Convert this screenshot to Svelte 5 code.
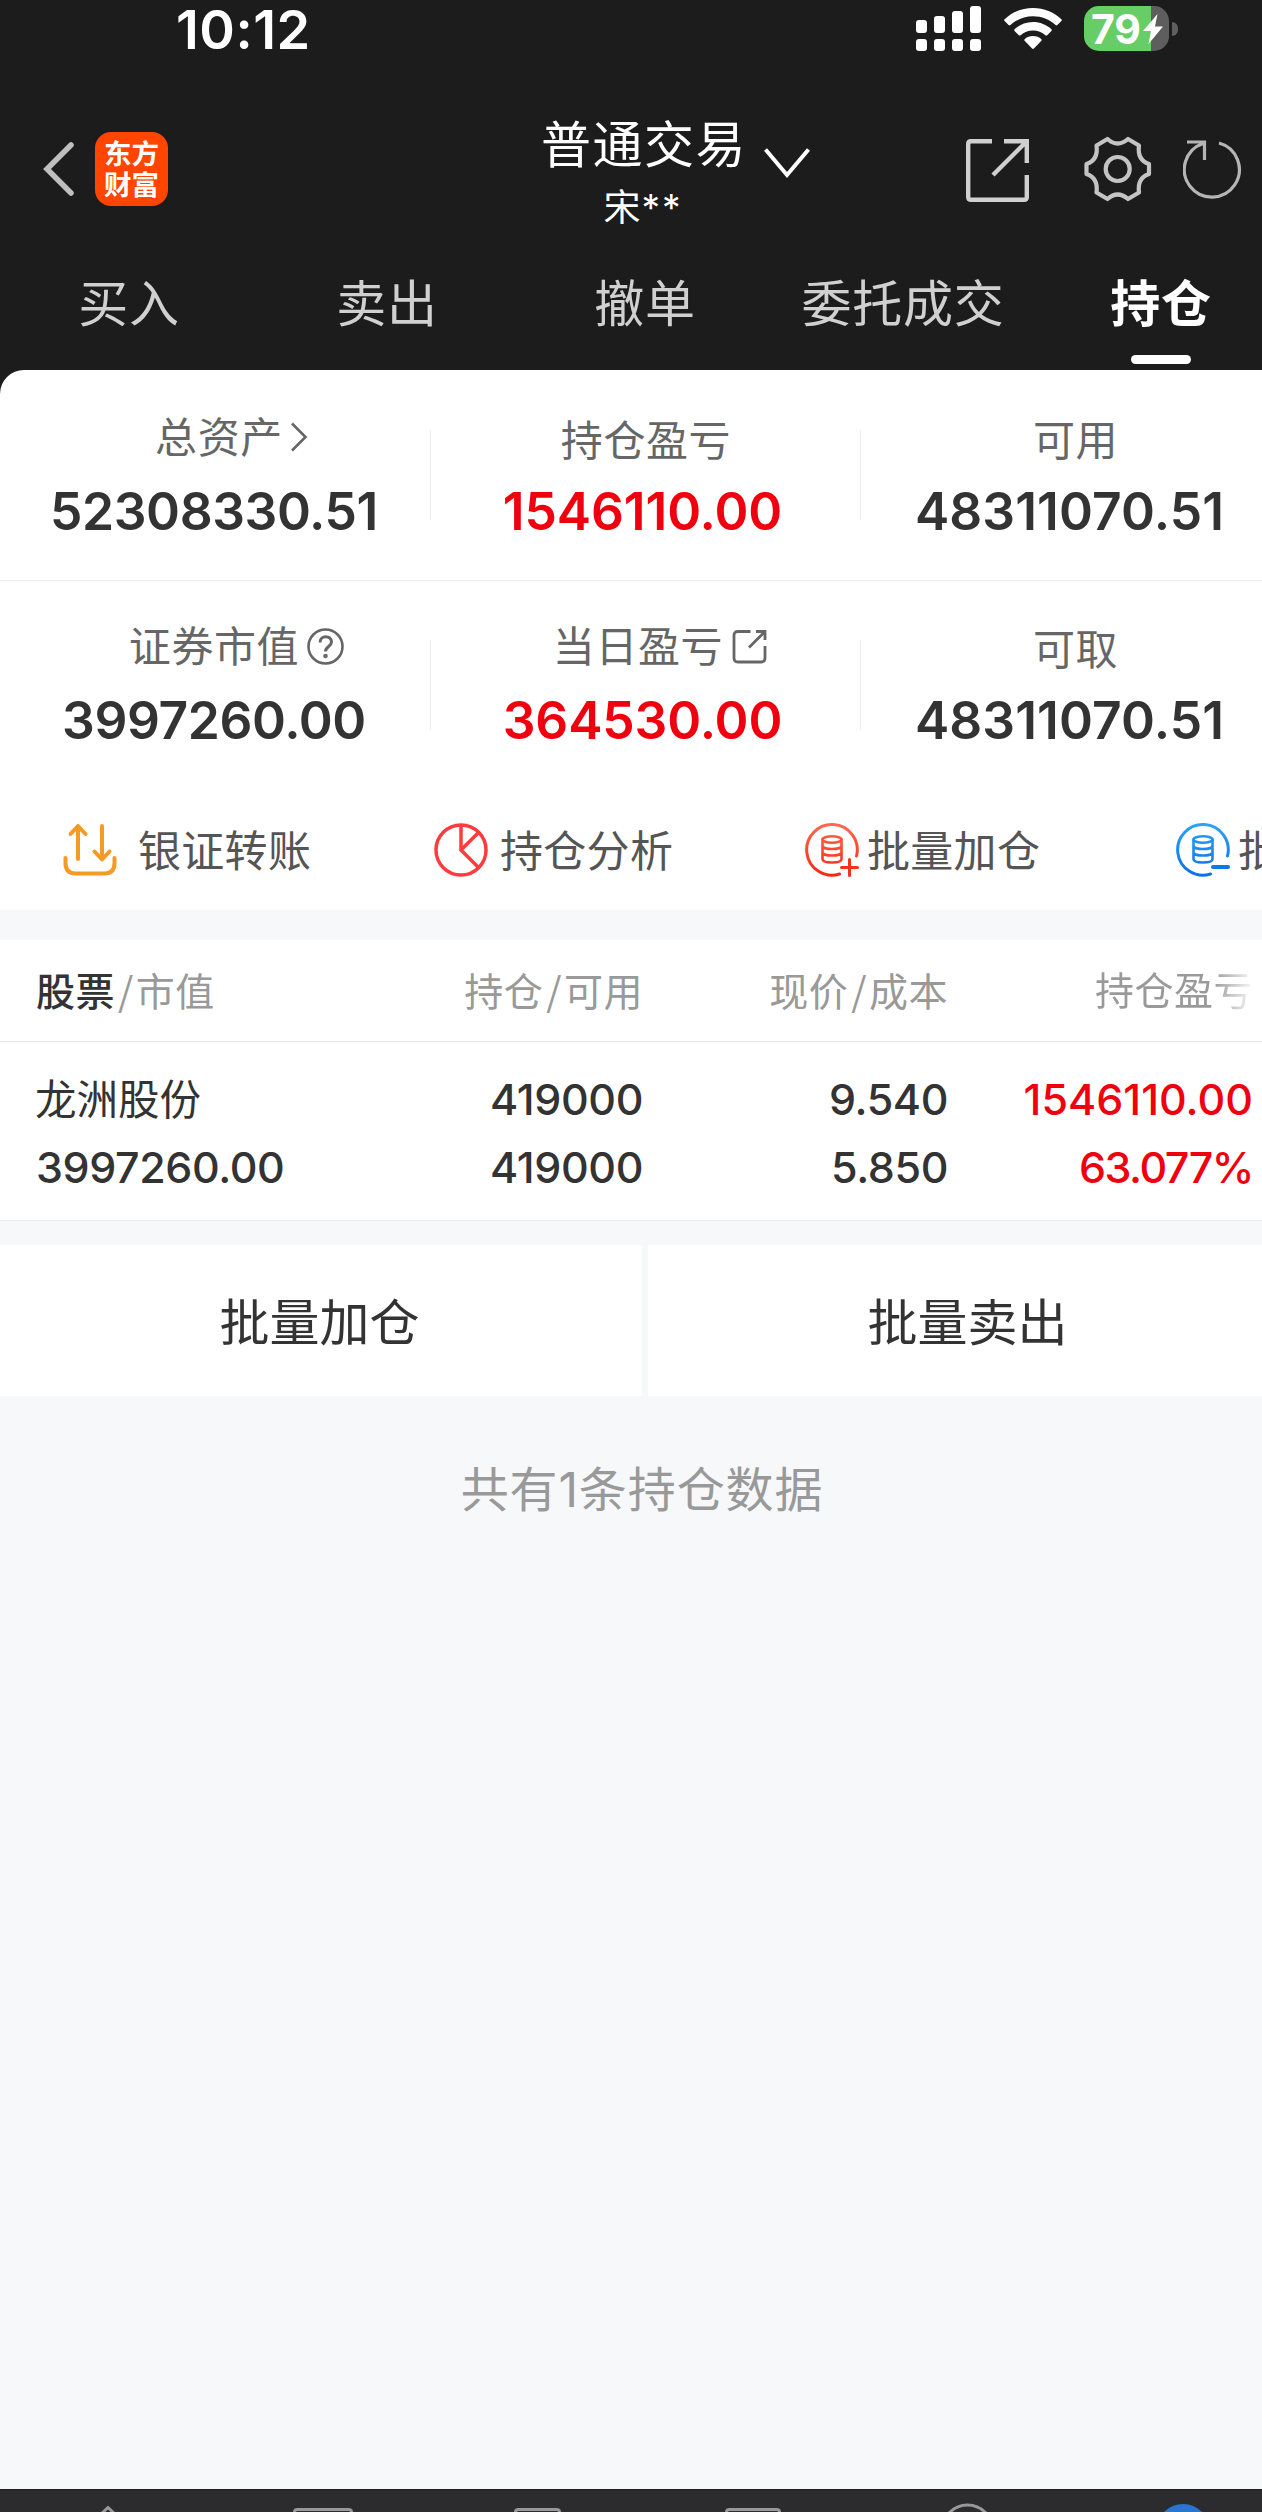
<script>
  const tabs = ['买入', '卖出', '撤单', '委托成交', '持仓'];
  const activeTab = '持仓';

  const summary = [
    [
      { label: '总资产', value: '52308330.51', icon: 'arrow' },
      { label: '持仓盈亏', value: '1546110.00', red: true },
      { label: '可用', value: '48311070.51' }
    ],
    [
      { label: '证券市值', value: '3997260.00', icon: 'help' },
      { label: '当日盈亏', value: '364530.00', icon: 'share', red: true },
      { label: '可取', value: '48311070.51' }
    ]
  ];

  const actions = [
    { label: '银证转账', icon: 'transfer' },
    { label: '持仓分析', icon: 'pie' },
    { label: '批量加仓', icon: 'add' },
    { label: '批量卖出', icon: 'minus' }
  ];

  const holdings = [
    {
      name: '龙洲股份',
      market: '3997260.00',
      total: '419000',
      available: '419000',
      price: '9.540',
      cost: '5.850',
      profit: '1546110.00',
      rate: '63.077%'
    }
  ];
</script>

<div class="viewport">
  <div class="screen">
    <header>
      <div class="status">
        <span class="time">10:12</span>
        <svg class="signal" width="66" height="46" viewBox="0 0 66 46" fill="#fff">
          <rect x="0" y="14" width="11" height="13" rx="3" />
          <rect x="18" y="10" width="11" height="17" rx="3" />
          <rect x="36" y="5" width="11" height="22" rx="3" />
          <rect x="54" y="0" width="11" height="27" rx="3" />
          <rect x="0" y="33" width="11" height="12" rx="3" />
          <rect x="18" y="33" width="11" height="12" rx="3" />
          <rect x="36" y="33" width="11" height="12" rx="3" />
          <rect x="54" y="33" width="11" height="12" rx="3" />
        </svg>
        <svg class="wifi" width="58" height="42" viewBox="0 0 58 42" fill="#fff">
          <path d="M29 0C18 0 8 4 .6 11.200q-.9.9 0 1.800l4 4q.9.800 1.800 0C12.500 11.500 20.300 8.300 29 8.300s16.500 3.200 22.600 8.700q.9.800 1.800 0l4-4q.9-.9 0-1.800C50 4 40 0 29 0z" />
          <path d="M29 14c-7 0-13.500 2.700-18.400 7.200q-.9.900 0 1.800l4.200 4.200q.9.800 1.800 0c3.300-3 7.600-4.800 12.400-4.800s9.100 1.800 12.400 4.800q.9.800 1.800 0l4.200-4.200q.9-.9 0-1.800C42.500 16.700 36 14 29 14z" />
          <path d="M29 28c-3.300 0-6.200 1.200-8.400 3.200q-.7.800 0 1.600l7.500 7.700q.9.900 1.800 0l7.500-7.700q.7-.8 0-1.600C35.200 29.200 32.300 28 29 28z" />
        </svg>
        <div class="battery">
          <span>79</span>
          <svg width="20" height="30" viewBox="0 0 20 30" fill="#fff">
            <path d="M14.500 0L0 17h8L5.500 30 20 12.500h-8z" />
          </svg>
        </div>
        <i class="nub"></i>
      </div>

      <div class="nav">
        <svg class="back" width="32" height="56" viewBox="0 0 32 56" fill="none" stroke="#bfbfbf" stroke-width="5.500" stroke-linecap="round">
          <path d="M28 4L4 28l24 24" stroke-linejoin="miter" />
        </svg>
        <div class="logo"><span>东方</span><span>财富</span></div>
        <div class="title">
          <strong>普通交易</strong>
          <small>宋<i>**</i></small>
        </div>
        <svg class="down" width="46" height="31" viewBox="0 0 46 31" fill="none" stroke="#fff" stroke-width="4">
          <path d="M1.500 1.500L23 27l21.500-25.500" />
        </svg>
        <svg class="nav-share" width="64" height="64" viewBox="0 0 64 64" fill="none" stroke="#d0d0d0" stroke-width="4.400">
          <path d="M26 2.200H5q-2.800 0-2.800 2.800V58q0 2.800 2.800 2.800h53q2.800 0 2.800-2.800V36" />
          <path d="M38 2.200h22.800V24M60 3L27 36" />
        </svg>
        <svg class="gear" width="68" height="66" viewBox="0 0 68 66" fill="none" stroke="#c4c4c4" stroke-width="4.200" stroke-linejoin="round">
          <path d="M23.500 3q10 9 20.500 0L55 9.500q-2 14.500 10 18.500v10q-12 4-10 18.500L44 63q-10.500-9-20.500 0l-11-6.500q2-14.500-10-18.500V28q12-4 10-18.500z" />
          <circle cx="33.700" cy="33" r="12" />
        </svg>
        <svg class="refresh" width="60" height="60" viewBox="0 0 60 60" fill="none" stroke="#b5b5b5" stroke-width="3.200">
          <path d="M36 4A27.500 27.500 0 1 1 20 4.500M4 3h17.500v18" />
        </svg>
      </div>

      <nav class="tabs">
        {#each tabs as tab}
          <div class="tab" class:active={tab === activeTab}>{tab}</div>
        {/each}
      </nav>
    </header>

    <section class="summary">
      {#each summary as row}
        <div class="summary-row">
          {#each row as cell}
            <div class="cell" class:with-icon={cell.icon}>
              <div class="label {cell.icon ?? ''}">
                <span>{cell.label}</span>
                {#if cell.icon === 'arrow'}
                  <svg width="18" height="30" viewBox="0 0 18 30" fill="none" stroke="#666" stroke-width="2.600">
                    <path d="M2 1.500L15.500 15 2 28.500" />
                  </svg>
                {:else if cell.icon === 'help'}
                  <svg width="37" height="37" viewBox="0 0 37 37" fill="none" stroke="#666" stroke-width="2.600">
                    <circle cx="18.500" cy="18.500" r="17" />
                    <path d="M13 14.500c0-8 11.500-7.500 11.500-.5 0 4.500-6 4.500-6 9.500" stroke-width="3" />
                    <circle cx="18.500" cy="28" r="1" />
                  </svg>
                {:else if cell.icon === 'share'}
                  <svg width="35" height="35" viewBox="0 0 35 35" fill="none" stroke="#666" stroke-width="2.800">
                    <path d="M18.500 2.500H6q-4 0-4 4V29q0 4 4 4h23q4 0 4-4V17" />
                    <path d="M24 2.500h9V11M32.500 3L17 18.500" />
                  </svg>
                {/if}
              </div>
              <div class="value" class:red={cell.red}>{cell.value}</div>
            </div>
          {/each}
        </div>
      {/each}

      <div class="actions">
        {#each actions as action}
          <div class="action {action.icon}">
            {#if action.icon === 'transfer'}
              <svg width="54" height="54" viewBox="0 0 54 54" fill="none" stroke="#f39a27" stroke-width="4" stroke-linecap="round" stroke-linejoin="round">
                <path d="M2.500 35v5q0 10.500 10 10.500h29q10 0 10-10.500v-5" />
                <path d="M15 36V3M7.500 11L15 3l7.500 8M39 3v33M31.500 28.500l7.500 8 7.500-8" />
              </svg>
            {:else if action.icon === 'pie'}
              <svg width="54" height="54" viewBox="0 0 54 54" fill="none" stroke="#ff3b3e" stroke-width="3.500">
                <circle cx="27" cy="27" r="25" />
                <path d="M27 2v25l17.500 17.500M27 27L44.500 9.500" />
              </svg>
            {:else}
              <svg width="54" height="54" viewBox="0 0 54 54" fill="none" stroke="url(#grad-{action.icon})" stroke-width="3" stroke-linecap="round">
                <defs>
                  <linearGradient id="grad-{action.icon}" gradientUnits="userSpaceOnUse" x1="0" y1="0" x2="0" y2="54">
                    <stop offset="0" stop-color={action.icon === 'add' ? '#ff6a50' : '#2ba5f5'} />
                    <stop offset="1" stop-color={action.icon === 'add' ? '#fb2512' : '#0b70ea'} />
                  </linearGradient>
                </defs>
                <path d="M51.500 33A25.300 25.300 0 1 0 34.500 51" />
                <ellipse cx="27" cy="16.500" rx="9.500" ry="3.200" stroke-width="2.600" />
                <path d="M17.500 16.500V36q0 3.500 9.500 3.500t9.500-3.500V16.500M17.500 23q1 3 9.500 3t9.500-3M17.500 29.500q1 3 9.500 3t9.500-3" stroke-width="2.600" />
                {#if action.icon === 'add'}
                  <path d="M36.500 44.500h16M44.500 36.500v16" stroke="#fb3018" />
                {:else}
                  <path d="M37 44h15" stroke="#0b78ec" stroke-width="4" />
                {/if}
              </svg>
            {/if}
            <span>{action.label}</span>
          </div>
        {/each}
      </div>
    </section>

    <section class="holdings">
      <div class="row head">
        <div><b>股票</b><i>/</i>市值</div>
        <div>持仓<i>/</i>可用</div>
        <div>现价<i>/</i>成本</div>
        <div class="fade">持仓盈亏</div>
      </div>
      {#each holdings as item}
        <div class="row item">
          <div><span class="name">{item.name}</span><span>{item.market}</span></div>
          <div><span>{item.total}</span><span>{item.available}</span></div>
          <div><span>{item.price}</span><span>{item.cost}</span></div>
          <div class="red"><span>{item.profit}</span><span class="rate">{item.rate}</span></div>
        </div>
      {/each}
    </section>

    <div class="buttons">
      <button>批量加仓</button>
      <button>批量卖出</button>
    </div>

    <p class="count">共有1条持仓数据</p>

    <footer>
      <svg width="1290" height="22" viewBox="0 1 1290 22" fill="none" stroke="#98989c" stroke-width="3">
        <path d="M99 27l9-8.500 9 8.500" />
        <path d="M294.500 24v-1q0-2.500 3-2.500h51q3 0 3 2.500v1" />
        <path d="M515.500 24v-1q0-2.500 3-2.500h38q3 0 3 2.500v1" />
        <path d="M726.500 24v-1q0-2.500 3-2.500h47q3 0 3 2.500v1" />
        <circle cx="967.500" cy="41" r="25" />
        <circle cx="1183" cy="42" r="27" fill="#2a75d0" stroke="none" />
      </svg>
    </footer>
  </div>
</div>

<style>
  .viewport {
    width: 100%;
    height: 2512px;
    overflow: hidden;
  }

  .screen {
    display: flex;
    flex-direction: column;
    width: 1290px;
    height: 2512px;
    background: #f7f8fa;
    color: #333;
    font-family: Inter, "Noto Sans CJK SC", sans-serif;
  }

  svg {
    display: block;
    flex: none;
  }

  header {
    position: relative;
    z-index: 1;
    height: 370px;
    flex: none;
    color: #fff;
  }

  .status {
    display: flex;
    height: 64px;
    padding-left: 176px;
    box-sizing: border-box;
    background: #1c1c1c;
  }

  .time {
    width: 740px;
    font-size: 54px;
    font-weight: 600;
    line-height: 60px;
    letter-spacing: 0.500px;
  }

  .signal {
    margin-top: 6px;
  }

  .wifi {
    margin: 8px 0 0 22px;
  }

  .battery {
    display: flex;
    align-items: center;
    gap: 2px;
    width: 85px;
    height: 45px;
    margin: 6px 0 0 22px;
    padding-left: 7px;
    box-sizing: border-box;
    border-radius: 15px;
    background: linear-gradient(90deg, #67ce67 67px, #5e5e5e 67px);
    font-size: 41px;
    font-weight: 700;
    letter-spacing: -0.200px;
  }

  .nub {
    width: 6px;
    height: 14px;
    margin: 22px 0 0 3px;
    border-radius: 0 6px 6px 0;
    background: #5e5e5e;
  }

  .nav {
    display: flex;
    height: 186px;
    padding-left: 43px;
    box-sizing: border-box;
    background: #1c1c1c;
  }

  .back {
    margin-top: 77px;
  }

  .logo {
    display: flex;
    flex-direction: column;
    justify-content: center;
    width: 73px;
    height: 74px;
    margin: 68px 0 0 20px;
    padding-top: 2px;
    box-sizing: border-box;
    border-radius: 16px;
    background: #ff4500;
    font-size: 27.500px;
    font-weight: 700;
    line-height: 31px;
    text-align: center;
  }

  .title {
    display: flex;
    flex-direction: column;
    align-items: center;
    width: 202px;
    margin: 48px 0 0 375px;
  }

  .title strong {
    font-size: 50px;
    font-weight: 400;
    line-height: 66px;
    letter-spacing: 1.500px;
    white-space: nowrap;
  }

  .title small {
    margin-left: -2px;
    font-size: 37px;
    line-height: 59px;
  }

  .title i {
    margin-left: 1px;
    font-style: normal;
    letter-spacing: 2px;
  }

  .down {
    margin: 84px 0 0 19px;
  }

  .nav-share {
    margin: 75px 0 0 156px;
  }

  .gear {
    margin: 72px 0 0 54px;
  }

  .refresh {
    margin: 75px 0 0 31px;
  }

  .tabs {
    display: grid;
    grid-template-columns: repeat(5, 1fr);
    height: 120px;
    background: #1c1c1c;
  }

  .tab {
    display: flex;
    flex-direction: column;
    align-items: center;
    color: #d0d0d0;
    font-size: 50px;
    line-height: 108px;
    letter-spacing: 0.800px;
  }

  .tab.active {
    color: #fff;
    font-weight: 700;
  }

  .tab.active::after {
    content: '';
    width: 60px;
    height: 9px;
    margin-top: -3px;
    border-radius: 5px;
    background: #fff;
  }

  .summary {
    height: 540px;
    flex: none;
    border-radius: 24px 24px 0 0;
    background: #fff;
    box-shadow: 0 -24px 0 0 #1c1c1c;
  }

  .summary-row {
    display: grid;
    grid-template-columns: 431px 430px 429px;
    height: 210px;
  }

  .summary-row:first-child {
    box-shadow: 0 1px 0 #ececec;
  }

  .cell {
    padding-top: 40px;
    background: linear-gradient(#ececec, #ececec) right 60px / 1px 90px no-repeat;
    text-align: center;
  }

  .summary-row:nth-child(2) .cell {
    padding-top: 39px;
  }

  .cell:last-child {
    background: none;
  }

  .label {
    display: flex;
    align-items: center;
    justify-content: center;
    height: 60px;
    color: #666;
    font-size: 42px;
    letter-spacing: 0.600px;
  }

  .label span {
    padding-bottom: 6px;
  }

  .with-icon .label {
    margin-top: -3px;
    margin-bottom: 3px;
  }

  .label.arrow {
    gap: 7px;
    padding-left: 32px;
  }

  .label.help {
    gap: 8px;
    padding-left: 42px;
  }

  .label.share {
    gap: 9px;
    padding-left: 28px;
  }

  .value {
    padding-right: 3px;
    font-size: 51.500px;
    font-weight: 600;
    line-height: 82px;
    letter-spacing: -0.400px;
  }

  .cell:nth-child(2) .value {
    padding-right: 7px;
    letter-spacing: -0.100px;
  }

  .cell:nth-child(3) .value {
    padding-right: 12px;
    letter-spacing: 0.100px;
  }

  .red {
    color: #f0000f;
  }

  .actions {
    display: flex;
    height: 119px;
    padding-left: 63px;
  }

  .action {
    display: flex;
    align-items: center;
    gap: 12px;
    width: 371px;
    height: 119px;
    flex: none;
    color: #555;
    font-size: 43px;
    white-space: nowrap;
  }

  .action span {
    padding-bottom: 4px;
    letter-spacing: 0.300px;
  }

  .transfer {
    gap: 21px;
  }

  .add,
  .minus {
    gap: 8px;
  }

  .holdings {
    margin-top: 30px;
    flex: none;
    background: #fff;
  }

  .row {
    display: grid;
    grid-template-columns: 343px 300px 305px 305px;
    padding-right: 37px;
    text-align: right;
  }

  .row > :first-child {
    padding-left: 36px;
    text-align: left;
  }

  .head {
    height: 101px;
    border-bottom: 1px solid #e8e8e8;
    color: #999;
    font-size: 39px;
    line-height: 98px;
    letter-spacing: 0.500px;
  }

  .head b {
    color: #333;
    font-weight: 500;
  }

  .head i {
    margin: 0 2px 0 3px;
    font-family: "Noto Sans CJK SC", sans-serif;
    font-style: normal;
  }

  .fade {
    background: linear-gradient(90deg, #999 265px, #fff 308px);
    background-clip: text;
    color: transparent;
    line-height: 102px;
  }

  .item {
    height: 179px;
    padding-top: 23px;
    box-sizing: border-box;
    border-bottom: 1px solid #ececec;
  }

  .item span {
    display: block;
    font-size: 43px;
    font-weight: 550;
    line-height: 68px;
    letter-spacing: -0.400px;
  }

  .item .red span {
    letter-spacing: 0;
  }

  .item .red .rate {
    letter-spacing: -1.500px;
  }

  .item .name {
    margin-left: -1px;
    padding-top: 3px;
    font-size: 41.500px;
    font-weight: 400;
    line-height: 65px;
    letter-spacing: 0;
  }

  .buttons {
    display: grid;
    grid-template-columns: 642px 642px;
    gap: 6px;
    height: 151px;
    margin-top: 24px;
    flex: none;
  }

  button {
    padding: 0 3px 4px 0;
    border: 0;
    background: #fff;
    color: #333;
    font: 400 50px "Noto Sans CJK SC", sans-serif;
  }

  .count {
    flex: 1;
    margin: 58px 0 0;
    padding-right: 6px;
    color: #999;
    font-size: 48px;
    line-height: 72px;
    letter-spacing: 0.900px;
    text-align: center;
  }

  footer {
    height: 22px;
    flex: none;
    border-top: 1px solid #1c1c1e;
    background: #2c2c2e;
  }
</style>
